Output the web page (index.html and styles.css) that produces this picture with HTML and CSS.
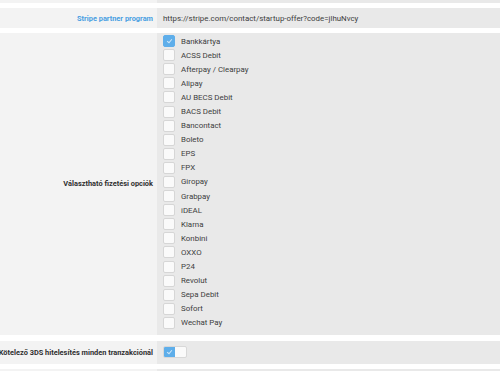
FILE: index.html
```html
<!DOCTYPE html>
<html lang="hu">
<head>
    <meta charset="UTF-8">
    <meta name="viewport" content="width=device-width, initial-scale=1.0">
    <title>Stripe beállítások</title>
    <link rel="stylesheet" href="styles.css">
</head>
<body>
    <div class="settings">
        <div class="row row-cut">
            <div class="label"></div>
            <div class="value"></div>
        </div>

        <div class="row row-link">
            <div class="label link-label">Stripe partner program</div>
            <div class="value">https://stripe.com/contact/startup-offer?code=jlhuNvcy</div>
        </div>

        <div class="row row-options">
            <div class="label">Választható fizetési opciók</div>
            <div class="value">
                <ul class="options">
                    <li><span class="box checked"></span>Bankkártya</li>
                    <li><span class="box"></span>ACSS Debit</li>
                    <li><span class="box"></span>Afterpay / Clearpay</li>
                    <li><span class="box"></span>Alipay</li>
                    <li><span class="box"></span>AU BECS Debit</li>
                    <li><span class="box"></span>BACS Debit</li>
                    <li><span class="box"></span>Bancontact</li>
                    <li><span class="box"></span>Boleto</li>
                    <li><span class="box"></span>EPS</li>
                    <li><span class="box"></span>FPX</li>
                    <li><span class="box"></span>Giropay</li>
                    <li><span class="box"></span>Grabpay</li>
                    <li><span class="box"></span>iDEAL</li>
                    <li><span class="box"></span>Klarna</li>
                    <li><span class="box"></span>Konbini</li>
                    <li><span class="box"></span>OXXO</li>
                    <li><span class="box"></span>P24</li>
                    <li><span class="box"></span>Revolut</li>
                    <li><span class="box"></span>Sepa Debit</li>
                    <li><span class="box"></span>Sofort</li>
                    <li><span class="box"></span>Wechat Pay</li>
                </ul>
            </div>
        </div>

        <div class="row row-toggle">
            <div class="label">Kötelező 3DS hitelesítés minden tranzakciónál</div>
            <div class="value">
                <span class="toggle"><span class="toggle-on"></span></span>
            </div>
        </div>

        <div class="row row-cut">
            <div class="label"></div>
            <div class="value"></div>
        </div>
    </div>
</body>
</html>
```

FILE: styles.css
```css
body {
    margin: 0;
    font-family: Roboto, "Liberation Sans", Arial, sans-serif;
    font-size: 7.9px;
    color: #3d3d3d;
    background-color: #fff;
    overflow: hidden;
}
.settings {
    display: flex;
    flex-direction: column;
    gap: 5px;
    margin-top: -17px;
}
.row {
    display: grid;
    grid-template-columns: 157px 1fr;
}
.row-cut {
    height: 20px;
}
.label {
    background-color: #f3f3f3;
    font-weight: bold;
    font-size: 7.4px;
    text-align: right;
    padding-right: 4px;
    display: flex;
    align-items: center;
    justify-content: flex-end;
    white-space: nowrap;
    color: #2f2f2f;
}
.value {
    background-color: #e9e9e9;
    padding-left: 6px;
    display: flex;
    align-items: center;
}
.row-link {
    height: 20px;
}
.link-label {
    color: #4a9fe2;
}
.row-options {
    margin-bottom: 1px;
}
.options {
    list-style: none;
    margin: 0;
    padding: 1px 0 5px;
}
.options li {
    display: flex;
    align-items: center;
    height: 14.1px;
}
.box {
    width: 12px;
    height: 12px;
    margin-right: 6px;
    background-color: #fafafa;
    border: 1px solid #d6d6d6;
    border-radius: 2px;
    box-sizing: border-box;
    flex-shrink: 0;
}
.box.checked {
    background-color: #5eaeea;
    border-color: #5eaeea;
    position: relative;
}
.box.checked::after {
    content: "";
    position: absolute;
    left: 3.5px;
    top: 2px;
    width: 2px;
    height: 4px;
    border: solid rgba(255,255,255,0.7);
    border-width: 0 1px 1px 0;
    transform: rotate(40deg);
}
.row-toggle {
    height: 23px;
}
.toggle {
    display: flex;
    width: 24px;
    height: 12px;
    background-color: #fafafa;
    border: 1px solid #d8d8d8;
    border-radius: 2px;
    box-sizing: border-box;
    overflow: hidden;
}
.toggle-on {
    width: 11px;
    background-color: #5eaeea;
    position: relative;
}
.toggle-on::after {
    content: "";
    position: absolute;
    left: 4px;
    top: 2px;
    width: 2px;
    height: 4px;
    border: solid rgba(255,255,255,0.7);
    border-width: 0 1px 1px 0;
    transform: rotate(40deg);
}
```
